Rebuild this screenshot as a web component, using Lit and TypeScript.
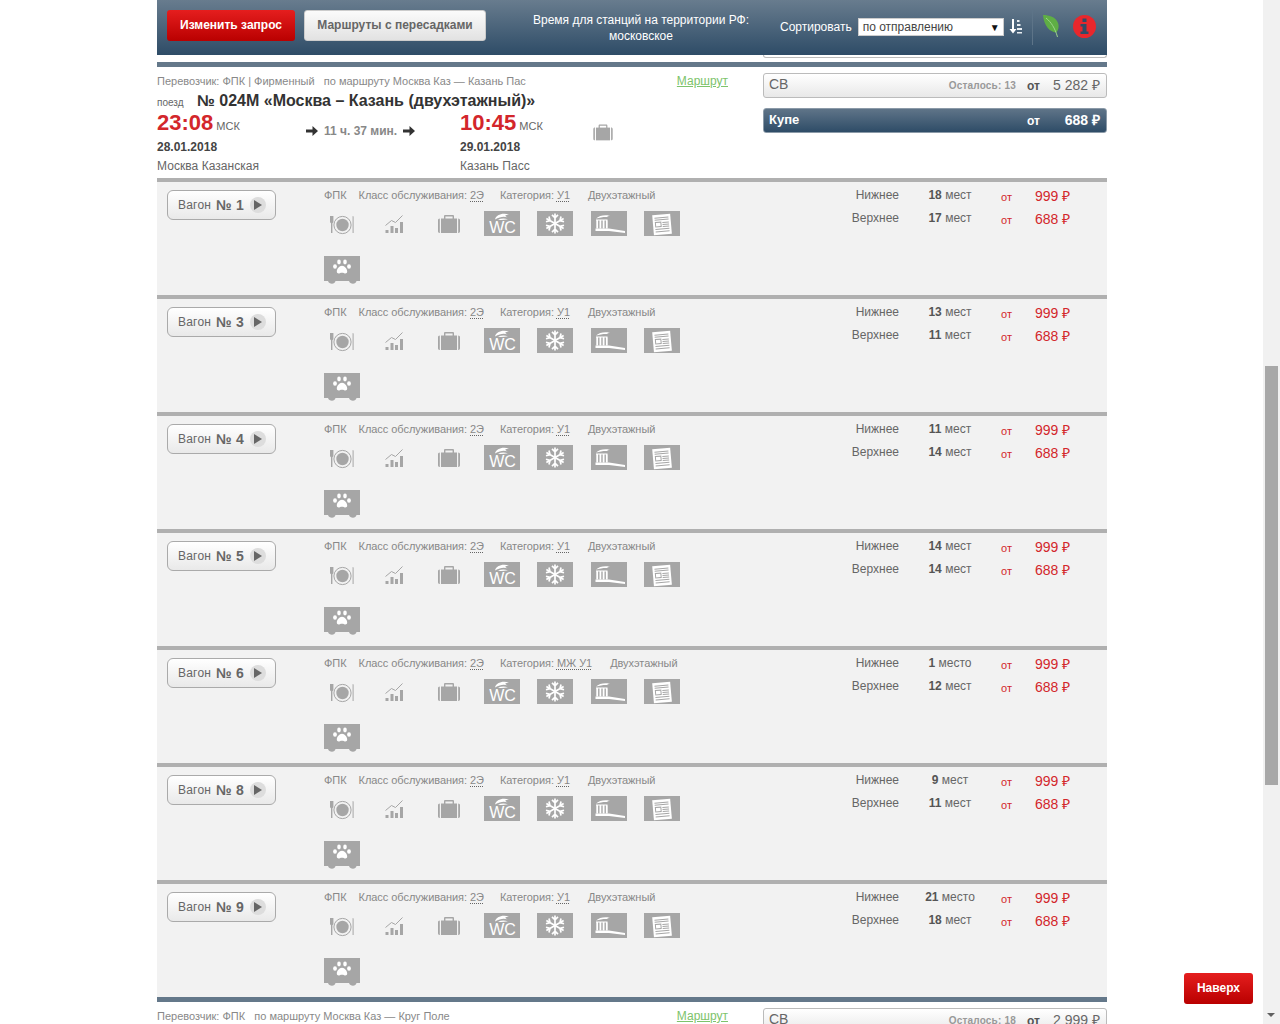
import { LitElement, html, css, svg } from 'lit';
import { customElement } from 'lit/decorators.js';

const wagons = [
  { num: 1, cat: 'У1', lower: [18, 'мест'], upper: [17, 'мест'] },
  { num: 3, cat: 'У1', lower: [13, 'мест'], upper: [11, 'мест'] },
  { num: 4, cat: 'У1', lower: [11, 'мест'], upper: [14, 'мест'] },
  { num: 5, cat: 'У1', lower: [14, 'мест'], upper: [14, 'мест'] },
  { num: 6, cat: 'МЖ У1', lower: [1, 'место'], upper: [12, 'мест'] },
  { num: 8, cat: 'У1', lower: [9, 'мест'], upper: [11, 'мест'] },
  { num: 9, cat: 'У1', lower: [21, 'место'], upper: [18, 'мест'] },
];

const GRAY = '#a6a6a6';

const plate = svg`<g fill="${GRAY}">
  <path d="M6 5h3.400v6.200l-1 1V22H7v-9.800l-1-1z" />
  <circle cx="18.500" cy="14" r="8.600" fill="none" stroke="${GRAY}" stroke-width="1" />
  <circle cx="18.500" cy="14" r="6.200" />
  <path d="M28.600 5l1 .4V22h-1z" />
</g>`;

const chart = svg`<g fill="${GRAY}">
  <path d="M8.500 14.500l6-5 4 2 7-7" fill="none" stroke="${GRAY}" stroke-width="1" />
  <rect x="8.500" y="19" width="3" height="3" />
  <rect x="13.500" y="15" width="3" height="7" />
  <rect x="18" y="17" width="3" height="5" />
  <rect x="23" y="11" width="3" height="11" />
</g>`;

const suitcase = svg`<g fill="${GRAY}">
  <path d="M13 8V5.200C13 4.500 13.500 4 14.200 4h7.600C22.500 4 23 4.500 23 5.200V8h-1.400V5.400h-7.200V8z" />
  <rect x="10" y="7.500" width="16" height="14.500" />
  <path d="M8.800 7.500v14.500C7.700 22 7 21.300 7 20.200V9.300C7 8.200 7.700 7.500 8.800 7.500zM27.200 7.500v14.500c1.100 0 1.800-.7 1.800-1.800V9.300c0-1.100-.7-1.800-1.800-1.800z" />
</g>`;

const wc = svg`<rect width="36" height="25" fill="${GRAY}" />
  <path d="M11 8.500C12 4 18 1.500 25 3.500 21 3.800 20 5 23.500 6.200 19 5 16 5.800 11 8.500zM14 8.800c3-1.500 6-1.700 10-.6-3.500.8-7 1-10 .6z" fill="#fff" />
  <text x="18.500" y="22.400" text-anchor="middle" class="wc">WC</text>`;

const snow = svg`<rect width="36" height="25" fill="${GRAY}" />
  <g stroke="#fff" stroke-width="1.700" fill="none">
    ${[0, 60, 120, 180, 240, 300].map(
      (a) => svg`<path d="M18 12.500V2.500M15 3.800l3 3 3-3" transform="rotate(${a} 18 12.500)" />`,
    )}
  </g>`;

const brush = svg`<rect width="36" height="25" fill="${GRAY}" />
  <path d="M5 7.500C8 4.500 13 3.500 19 4.500c-3 .4-3.500 1-1 1.600C14 5.600 10 6 5 7.500z" fill="#fff" />
  <path d="M5 8.500h11.500v1H5zM5.300 9.500h1.800v8H5.300zM8.500 9.500h1.800v8H8.500zM11.700 9.500h1.800v8h-1.800zM14.900 9.500h1.800v8h-1.800z" fill="#fff" />
  <path d="M4.500 17.500H18l16 2.500v2L18 20H4.500z" fill="#fff" />`;

const doc = svg`<rect width="36" height="25" fill="${GRAY}" />
  <g transform="rotate(-5 18 13)">
    <rect x="9" y="3.500" width="18" height="20" fill="#fff" />
    <path d="M11 6.500h14M11 8.500h14M18.500 11.500h6.500M18.500 13.500h6.500M18.500 15.500h6.500M11 18h14M11 20.500h14" stroke="${GRAY}" stroke-width="1" />
    <rect x="11.500" y="11" width="5.500" height="4.500" fill="none" stroke="${GRAY}" stroke-width="1" />
  </g>`;

const paw = svg`<path d="M0 0h36v25h-3.500c-.5 1.800-1.800 2.800-3.500 2.800S25.500 26.800 25 25H11.500c-.5 1.800-1.800 2.800-3.500 2.800S4.500 26.800 4 25H0z" fill="${GRAY}" />
  <g fill="#fff">
    <ellipse cx="15" cy="6" rx="1.800" ry="2.400" />
    <ellipse cx="21" cy="6" rx="1.800" ry="2.400" />
    <ellipse cx="11" cy="10.500" rx="1.900" ry="2.200" />
    <ellipse cx="25" cy="10.500" rx="1.900" ry="2.200" />
    <path d="M18 9.800c2.800 0 5.200 3.200 5.200 5.800 0 2-1.800 2.200-3 1.700-1.400-.6-3-.6-4.400 0-1.200.5-3 .3-3-1.700 0-2.600 2.400-5.800 5.200-5.800z" />
  </g>`;

const icons = [plate, chart, suitcase, wc, snow, brush, doc];

const arrow = html`<svg width="12" height="10" viewBox="0 0 12 10"><path d="M0 3.500h6.500V0L12 5 6.500 10V6.500H0z" fill="#333" /></svg>`;

@customElement('app-root')
export class AppRoot extends LitElement {
  static styles = css`
    :host {
      display: block;
      position: relative;
      width: 1280px;
      height: 1024px;
      overflow: hidden;
      background: #fff;
      font-family: 'Liberation Sans', Arial, sans-serif;
      font-size: 12px;
      color: #666;
    }

    .page {
      width: 950px;
      margin-left: 157px;
    }

    /* header */
    .header {
      height: 55px;
      display: flex;
      align-items: flex-start;
      background: linear-gradient(#687c8e, #2e4c67);
      color: #fff;
    }

    .btn {
      height: 31px;
      line-height: 30px;
      box-sizing: border-box;
      border-radius: 3px;
      font-weight: bold;
      text-align: center;
    }

    .btn.red {
      background: linear-gradient(#e51e1e, #b90000);
      color: #fff;
    }

    .change {
      width: 128px;
      margin: 10px 9px 0 10px;
    }

    .transfers {
      width: 182px;
      margin-top: 10px;
      background: linear-gradient(#fbfbfb, #e2e2e2);
      border: 1px solid #ccc;
      line-height: 28px;
      color: #666;
    }

    .tz {
      width: 240px;
      margin: 12px 0 0 35px;
      line-height: 16px;
      text-align: center;
    }

    .sort-label {
      margin: 19px 0 0 19px;
      line-height: 16px;
    }

    .select {
      width: 146px;
      height: 18px;
      box-sizing: border-box;
      margin: 18px 0 0 6px;
      padding: 0 3px 0 4px;
      display: flex;
      justify-content: space-between;
      align-items: center;
      background: #fff;
      border: 1px solid #ccc;
      color: #444;
    }

    .select i {
      font-style: normal;
      font-size: 10px;
      color: #111;
    }

    .sort-icon {
      margin: 19px 0 0 5px;
    }

    .divider {
      width: 1px;
      height: 35px;
      margin: 10px 0 0 10px;
      background: #5d7488;
    }

    .leaf {
      margin: 14px 0 0 10px;
    }

    .info {
      margin: 15px 0 0 12px;
    }

    .stub {
      height: 7px;
      display: flex;
      justify-content: flex-end;
    }

    .stub div {
      width: 344px;
      height: 3px;
      box-sizing: border-box;
      border: 1px solid #bbb;
      border-top: none;
      border-radius: 0 0 3px 3px;
    }

    .slate {
      height: 5px;
      background: #64788a;
    }

    /* train block */
    .train {
      height: 111px;
      display: flex;
    }

    .train-main {
      width: 606px;
      flex: none;
    }

    .meta {
      display: flex;
      justify-content: space-between;
      padding: 7px 35px 0 0;
      font-size: 11px;
      line-height: 14px;
      color: #888;
    }

    .meta a {
      font-size: 12px;
      color: #7dc36b;
      text-decoration: underline;
    }

    .title {
      display: flex;
      align-items: baseline;
      height: 21px;
      margin-top: 2px;
      line-height: 21px;
      font-size: 16px;
      font-weight: bold;
      color: #333;
    }

    .title small {
      width: 40px;
      font-size: 10px;
      font-weight: normal;
      color: #666;
    }

    .times {
      display: grid;
      grid-template-columns: 149px 154px 127px auto;
    }

    .time {
      height: 24px;
      line-height: 24px;
      font-size: 11px;
      color: #666;
    }

    .time b {
      font-size: 22px;
      color: #d3262b;
      margin-right: 3px;
    }

    .date {
      margin-top: 4px;
      line-height: 16px;
      font-weight: bold;
      color: #444;
    }

    .station {
      margin-top: 3px;
      line-height: 16px;
      letter-spacing: 0.05px;
    }

    .duration {
      display: flex;
      align-items: center;
      gap: 6px;
      height: 24px;
      margin-top: 8px;
      font-weight: bold;
      color: #888;
    }

    .train-case {
      margin-top: 10px;
    }

    .offers {
      width: 344px;
      padding-top: 6px;
    }

    .offer {
      height: 25px;
      box-sizing: border-box;
      display: flex;
      align-items: center;
      padding: 0 6px 0 5px;
      margin-bottom: 10px;
      border: 1px solid #bbb;
      border-radius: 3px;
      background: linear-gradient(#fff, #e8e8e8);
      color: #666;
    }

    .offer .name {
      flex: 1;
      margin-bottom: 3px;
      font-size: 14px;
    }

    .offer .left {
      margin-right: 11px;
      font-size: 10px;
      font-weight: bold;
      letter-spacing: 0.2px;
      color: #999;
    }

    .offer .from {
      width: 26px;
      font-weight: bold;
      color: #555;
    }

    .offer .sum {
      width: 47px;
      margin-bottom: 2px;
      font-size: 14px;
      text-align: right;
    }

    .offer.active {
      background: linear-gradient(#5f7488, #2e4c67);
      border-color: #8b9aa8;
      color: #fff;
    }

    .offer.active .name {
      font-size: 13px;
      font-weight: bold;
    }

    .offer.active .from {
      color: #fff;
    }

    .offer.active .sum {
      font-weight: bold;
    }

    /* wagon rows */
    .wagon {
      height: 113px;
      display: flex;
      border-top: 4px solid #b0b0b0;
      background: #f2f2f2;
    }

    .wagon-btn {
      width: 109px;
      height: 30px;
      box-sizing: border-box;
      flex: none;
      margin: 8px 48px 0 10px;
      padding-left: 10px;
      display: flex;
      align-items: center;
      border: 1px solid #aaa;
      border-radius: 6px;
      background: linear-gradient(#fff, #e9e9e9);
      letter-spacing: 0.2px;
      color: #666;
    }

    .wagon-btn b {
      margin-left: 5px;
      font-size: 14px;
    }

    .wagon-btn i {
      position: relative;
      width: 16px;
      height: 16px;
      margin-left: 6px;
      border-radius: 50%;
      background: #ddd;
    }

    .wagon-btn i::after {
      content: '';
      position: absolute;
      left: 4px;
      top: 2.500px;
      border-left: 8px solid #666;
      border-top: 5.500px solid transparent;
      border-bottom: 5.500px solid transparent;
    }

    .details {
      width: 357px;
      flex: none;
      padding-top: 6px;
    }

    .tags {
      display: flex;
      height: 14px;
      line-height: 14px;
      font-size: 11px;
      letter-spacing: -0.05px;
      color: #888;
    }

    .tags span:nth-child(1) {
      margin-right: 12px;
    }

    .tags span:nth-child(2) {
      margin-right: 16px;
    }

    .tags span:nth-child(3) {
      margin-right: 18px;
    }

    .tags u {
      text-decoration: underline dotted #666;
      text-underline-offset: 2px;
    }

    .icons {
      display: grid;
      grid-template-columns: repeat(7, 36px);
      column-gap: 17.330px;
      row-gap: 20px;
      grid-auto-rows: 25px;
      margin-top: 9px;
    }

    .icons svg {
      display: block;
      overflow: visible;
    }

    .wc {
      font: 16px 'Liberation Sans', Arial, sans-serif;
      fill: #fff;
    }

    .seats {
      width: 426px;
      padding-top: 5px;
    }

    .seat {
      height: 23px;
      display: grid;
      grid-template-columns: 218px 102px 34px 1fr;
      line-height: 16px;
    }

    .seat .kind {
      text-align: right;
    }

    .seat .count {
      text-align: center;
    }

    .seat .count b {
      color: #555;
    }

    .seat .from {
      padding-top: 2px;
      font-size: 11px;
      color: #d3262b;
    }

    .seat .price {
      padding-top: 1px;
      font-size: 14px;
      color: #d3262b;
    }

    /* overlays */
    .scrollbar {
      position: absolute;
      left: 1263px;
      top: 0;
      width: 17px;
      height: 1024px;
      background: #f1f1f1;
    }

    .scrollbar::before {
      content: '';
      position: absolute;
      left: 2px;
      top: 366px;
      width: 13px;
      height: 419px;
      background: #a8a8a8;
    }

    .scrollbar::after {
      content: '';
      position: absolute;
      left: 4px;
      top: 1013px;
      border-top: 4px solid #606060;
      border-left: 4.500px solid transparent;
      border-right: 4.500px solid transparent;
    }

    .to-top {
      position: absolute;
      left: 1184px;
      top: 973px;
      width: 69px;
    }
  `;

  renderWagon(w: (typeof wagons)[number]) {
    return html`<div class="wagon">
      <div class="wagon-btn">Вагон <b>№ ${w.num}</b><i></i></div>
      <div class="details">
        <div class="tags">
          <span>ФПК</span>
          <span>Класс обслуживания: <u>2Э</u></span>
          <span>Категория: <u>${w.cat}</u></span>
          <span>Двухэтажный</span>
        </div>
        <div class="icons">
          ${icons.map((i) => html`<svg width="36" height="25" viewBox="0 0 36 25">${i}</svg>`)}
          <svg width="36" height="25" viewBox="0 0 36 25">${paw}</svg>
        </div>
      </div>
      <div class="seats">
        ${this.renderSeat('Нижнее', w.lower, '999')}
        ${this.renderSeat('Верхнее', w.upper, '688')}
      </div>
    </div>`;
  }

  renderSeat(kind: string, seats: (string | number)[], price: string) {
    return html`<div class="seat">
      <span class="kind">${kind}</span>
      <span class="count"><b>${seats[0]}</b> ${seats[1]}</span>
      <span class="from">от</span>
      <span class="price">${price} ₽</span>
    </div>`;
  }

  render() {
    return html`<div class="page">
        <div class="header">
          <div class="btn red change">Изменить запрос</div>
          <div class="btn transfers">Маршруты с пересадками</div>
          <div class="tz">Время для станций на территории РФ:<br />московское</div>
          <div class="sort-label">Сортировать</div>
          <div class="select">по отправлению<i>▼</i></div>
          <svg class="sort-icon" width="13" height="15" viewBox="0 0 13 15">
            <path d="M3 0h2v10h2.500L4 14.500.5 10H3z" fill="#fff" />
            <path d="M8 1h2.500v2H8zM8 5h3.500v2H8zM8 9h5v2H8zM8 13h5v1.500H8z" fill="#e8edf1" />
          </svg>
          <div class="divider"></div>
          <svg class="leaf" width="18" height="24" viewBox="0 0 18 24">
            <path d="M0 1c6 0 13 2 15 8 1.500 4 0 8-2 9.500C7 18 1 12 0 1z" fill="#5fae45" />
            <path d="M3 4c5 4 9 10 11.500 19" stroke="#9ed68a" stroke-width="1" fill="none" />
          </svg>
          <svg class="info" width="23" height="23" viewBox="0 0 23 23">
            <circle cx="11.500" cy="11.500" r="11.500" fill="#e8272c" />
            <rect x="9.500" y="3.500" width="4" height="3.500" fill="#2e4c67" />
            <path d="M7.500 9h6v7.500H15.500V19H7.500v-2.500h2V11.500h-2z" fill="#2e4c67" />
          </svg>
        </div>
        <div class="stub"><div></div></div>
        <div class="slate"></div>

        <div class="train">
          <div class="train-main">
            <div class="meta">
              <span>Перевозчик: ФПК | Фирменный &nbsp; по маршруту Москва Каз — Казань Пас</span>
              <a>Маршрут</a>
            </div>
            <div class="title"><small>поезд</small>№ 024М «Москва – Казань (двухэтажный)»</div>
            <div class="times">
              <div>
                <div class="time"><b>23:08</b>МСК</div>
                <div class="date">28.01.2018</div>
                <div class="station">Москва Казанская</div>
              </div>
              <div class="duration">${arrow}11 ч. 37 мин.${arrow}</div>
              <div>
                <div class="time"><b>10:45</b>МСК</div>
                <div class="date">29.01.2018</div>
                <div class="station">Казань Пасс</div>
              </div>
              <svg class="train-case" width="32" height="22" viewBox="0 0 36 25">${suitcase}</svg>
            </div>
          </div>
          <div class="offers">
            <div class="offer">
              <span class="name">СВ</span><span class="left">Осталось: 13</span><span class="from">от</span
              ><span class="sum">5 282 ₽</span>
            </div>
            <div class="offer active">
              <span class="name">Купе</span><span class="from">от</span><span class="sum">688 ₽</span>
            </div>
          </div>
        </div>

        ${wagons.map((w) => this.renderWagon(w))}
        <div class="slate"></div>

        <div class="train">
          <div class="train-main">
            <div class="meta">
              <span>Перевозчик: ФПК &nbsp; по маршруту Москва Каз — Круг Поле</span>
              <a>Маршрут</a>
            </div>
          </div>
          <div class="offers">
            <div class="offer">
              <span class="name">СВ</span><span class="left">Осталось: 18</span><span class="from">от</span
              ><span class="sum">2 999 ₽</span>
            </div>
          </div>
        </div>
      </div>
      <div class="scrollbar"></div>
      <div class="btn red to-top">Наверх</div>`;
  }
}
